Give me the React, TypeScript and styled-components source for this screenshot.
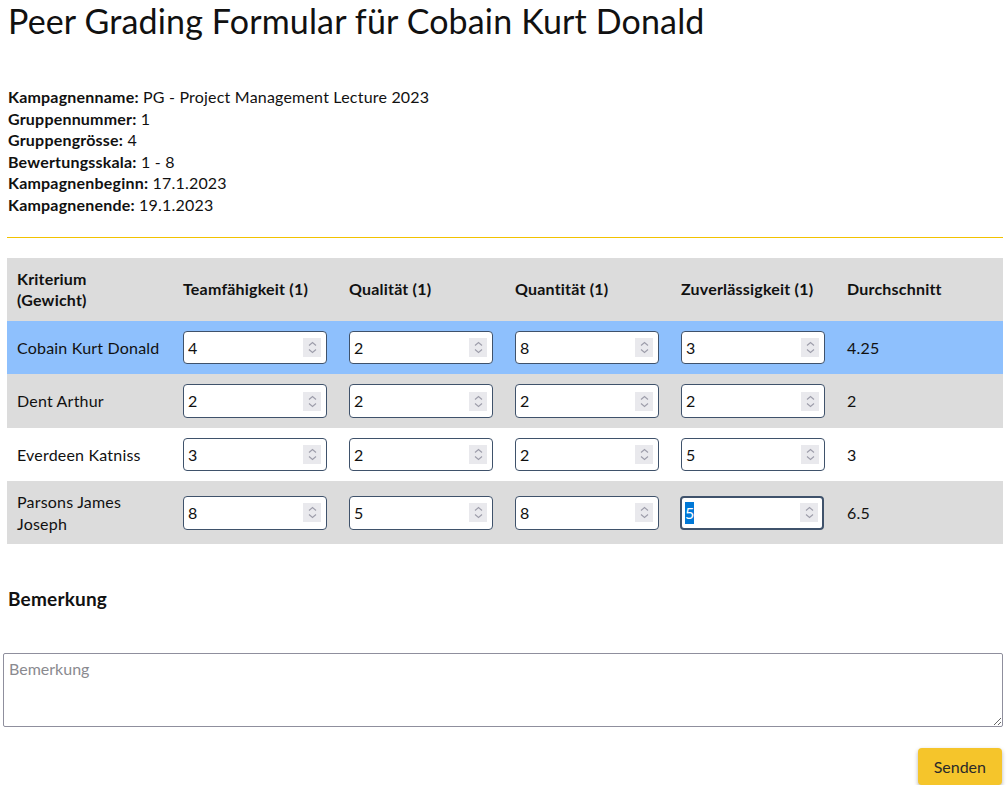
import { useEffect, useRef, useState } from "react";
import styled, { createGlobalStyle } from "styled-components";

const GlobalStyle = createGlobalStyle`
  body {
    margin: 0;
    background: #fff;
    color: #111;
    font-family: Lato, "Noto Sans", sans-serif;
    letter-spacing: 0.2px;
  }
  ::selection {
    background: #0078d7;
    color: #fff;
  }
`;

const Page = styled.main`
  width: 1000px;
  padding: 0 0 0 3px;
`;

const Title = styled.h1`
  margin: 0 0 0 5px;
  padding-top: 1px;
  font-size: 34px;
  font-weight: 400;
  line-height: 40px;
  letter-spacing: 0.15px;
`;

const InfoList = styled.div`
  margin: 45px 0 0 5px;
  font-size: 16px;
  line-height: 21.6px;
`;

const InfoLine = styled.div`
  b {
    font-weight: 700;
  }
`;

const Divider = styled.hr`
  margin: 21px 0 20px 4px;
  border: 0;
  border-top: 1px solid #f2c200;
  height: 0;
`;

const Table = styled.table`
  margin-left: 4px;
  width: 996px;
  table-layout: fixed;
  border-collapse: collapse;
  font-size: 16px;
  line-height: 21.6px;
`;

const HeadCell = styled.th`
  text-align: left;
  font-weight: 700;
  padding: 10px;
  background: #dcdcdc;
  vertical-align: middle;
`;

const Row = styled.tr<{ $tone: "blue" | "gray" | "white" }>`
  background: ${(p) =>
    p.$tone === "blue" ? "#8ec0fd" : p.$tone === "gray" ? "#dcdcdc" : "#fff"};
`;

const Cell = styled.td`
  padding: 10px;
  vertical-align: middle;
`;

const InputBox = styled.label<{ $focused?: boolean }>`
  display: flex;
  align-items: center;
  box-sizing: border-box;
  width: 144px;
  height: 33.5px;
  background: #fff;
  border: ${(p) => (p.$focused ? "2px" : "1px")} solid #3f526b;
  border-radius: 4px;
  padding: 0 ${(p) => (p.$focused ? "4px" : "5px")} 0
    ${(p) => (p.$focused ? "3px" : "4px")};
  margin-left: ${(p) => (p.$focused ? "-1px" : "0")};
`;

const NumberInput = styled.input`
  flex: 1;
  min-width: 0;
  border: 0;
  outline: none;
  padding: 0;
  background: transparent;
  font: inherit;
  color: #111;
  -moz-appearance: textfield;
  &::-webkit-inner-spin-button,
  &::-webkit-outer-spin-button {
    -webkit-appearance: none;
    margin: 0;
  }
`;

const Spinner = styled.span`
  display: flex;
  align-items: center;
  justify-content: center;
  width: 18px;
  height: 19px;
  background: #e9e9ed;
  flex-shrink: 0;
`;

const SectionTitle = styled.h2`
  margin: 43px 0 0 5px;
  font-size: 19px;
  font-weight: 700;
  line-height: 24px;
`;

const Remark = styled.textarea`
  display: block;
  box-sizing: border-box;
  width: 1000px;
  height: 74px;
  margin-top: 42px;
  padding: 4px 5px;
  border: 1px solid #8f8f9d;
  border-radius: 2px;
  font: inherit;
  font-size: 16px;
  line-height: 21px;
  color: #111;
  &::placeholder {
    color: #8a8a8f;
  }
`;

const Actions = styled.div`
  display: flex;
  justify-content: flex-end;
  padding-right: 1px;
  margin-top: 21px;
`;

const SendButton = styled.button`
  height: 37px;
  padding: 0 16px;
  background: #f5c52b;
  border: 0;
  border-radius: 4px;
  box-shadow: 0 2px 4px rgba(0, 0, 0, 0.3);
  font: inherit;
  font-size: 16px;
  color: #2a2a2a;
  cursor: pointer;
`;

const criteria = ["Teamfähigkeit", "Qualität", "Quantität", "Zuverlässigkeit"];

const initial = [
  { name: "Cobain Kurt Donald", grades: [4, 2, 8, 3] },
  { name: "Dent Arthur", grades: [2, 2, 2, 2] },
  { name: "Everdeen Katniss", grades: [3, 2, 2, 5] },
  { name: "Parsons James Joseph", grades: [8, 5, 8, 5] },
];

const SpinIcon = () => (
  <svg width="9" height="13" viewBox="0 0 9 13" fill="none">
    <path d="M1 4.5 L4.5 1.5 L8 4.5" stroke="#9d9daa" strokeWidth="1.1" />
    <path d="M1 8.5 L4.5 11.5 L8 8.5" stroke="#9d9daa" strokeWidth="1.1" />
  </svg>
);

const GradeInput = ({
  value,
  focused,
  onChange,
}: {
  value: number;
  focused?: boolean;
  onChange: (v: number) => void;
}) => {
  const ref = useRef<HTMLInputElement>(null);

  useEffect(() => {
    if (focused && ref.current) {
      ref.current.focus();
      ref.current.select();
    }
  }, [focused]);

  return (
    <InputBox $focused={focused}>
      <NumberInput
        ref={ref}
        type="number"
        min={1}
        max={8}
        value={value}
        onChange={(e) => onChange(Number(e.target.value))}
      />
      <Spinner>
        <SpinIcon />
      </Spinner>
    </InputBox>
  );
};

const average = (grades: number[]) =>
  String(Math.round((grades.reduce((a, b) => a + b, 0) / grades.length) * 100) / 100);

const App = () => {
  const [rows, setRows] = useState(initial);

  const update = (r: number, c: number, v: number) =>
    setRows((prev) =>
      prev.map((row, i) =>
        i === r ? { ...row, grades: row.grades.map((g, j) => (j === c ? v : g)) } : row
      )
    );

  return (
    <>
      <GlobalStyle />
      <Page>
        <Title>Peer Grading Formular für Cobain Kurt Donald</Title>
        <InfoList>
          <InfoLine>
            <b>Kampagnenname:</b> PG - Project Management Lecture 2023
          </InfoLine>
          <InfoLine>
            <b>Gruppennummer:</b> 1
          </InfoLine>
          <InfoLine>
            <b>Gruppengrösse:</b> 4
          </InfoLine>
          <InfoLine>
            <b>Bewertungsskala:</b> 1 - 8
          </InfoLine>
          <InfoLine>
            <b>Kampagnenbeginn:</b> 17.1.2023
          </InfoLine>
          <InfoLine>
            <b>Kampagnenende:</b> 19.1.2023
          </InfoLine>
        </InfoList>
        <Divider />
        <Table>
          <thead>
            <tr>
              <HeadCell>
                Kriterium
                <br />
                (Gewicht)
              </HeadCell>
              {criteria.map((c) => (
                <HeadCell key={c}>{c} (1)</HeadCell>
              ))}
              <HeadCell>Durchschnitt</HeadCell>
            </tr>
          </thead>
          <tbody>
            {rows.map((row, r) => (
              <Row key={row.name} $tone={r === 0 ? "blue" : r % 2 ? "gray" : "white"}>
                <Cell>{row.name}</Cell>
                {row.grades.map((g, c) => (
                  <Cell key={c}>
                    <GradeInput
                      value={g}
                      focused={r === 3 && c === 3}
                      onChange={(v) => update(r, c, v)}
                    />
                  </Cell>
                ))}
                <Cell>{average(row.grades)}</Cell>
              </Row>
            ))}
          </tbody>
        </Table>
        <SectionTitle>Bemerkung</SectionTitle>
        <Remark placeholder="Bemerkung" />
        <Actions>
          <SendButton type="button">Senden</SendButton>
        </Actions>
      </Page>
    </>
  );
};

export default App;
